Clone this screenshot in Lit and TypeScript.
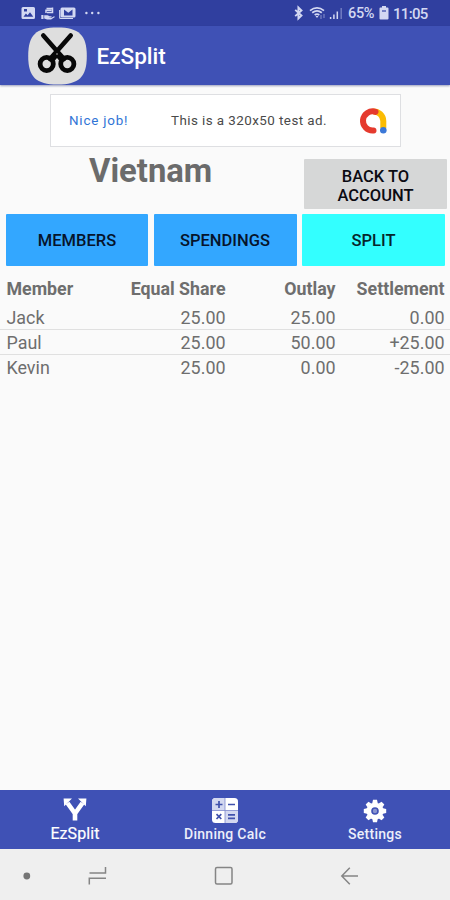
import { LitElement, html, css, svg } from "lit";
import { customElement, state } from "lit/decorators.js";
import { classMap } from "lit/directives/class-map.js";

interface Row {
  member: string;
  share: string;
  outlay: string;
  settlement: string;
}

const rows: Row[] = [
  { member: "Jack", share: "25.00", outlay: "25.00", settlement: "0.00" },
  { member: "Paul", share: "25.00", outlay: "50.00", settlement: "+25.00" },
  { member: "Kevin", share: "25.00", outlay: "0.00", settlement: "-25.00" },
];

@customElement("status-bar")
class StatusBar extends LitElement {
  static styles = css`
    :host {
      display: flex;
      align-items: center;
      height: 26px;
      padding: 0 22px 0 21px;
      box-sizing: border-box;
      background: #303f9f;
      color: #d3d8f2;
      font: 500 15px/26px Roboto, sans-serif;
    }
    svg { display: block; flex: none; }
    .spacer { flex: 1; }
    .pct { margin-left: 5px; width: 26px; padding-top: 2px; font-size: 14.5px; white-space: nowrap; letter-spacing: -0.35px; }
    .batt { margin-left: 5px; }
    .time { margin-left: 4px; width: 35px; padding-top: 2px; white-space: nowrap; letter-spacing: -0.7px; }
  `;
  render() {
    return html`
      <svg width="82" height="16" viewBox="0 0 82 16" fill="#d3d8f2">
        <path fill-rule="evenodd" d="M2 2h10.500a1.500 1.500 0 0 1 1.500 1.500v9a1.500 1.500 0 0 1-1.500 1.500H2a1.500 1.500 0 0 1-1.500-1.500v-9A1.500 1.500 0 0 1 2 2zM2.500 11.800h9.800L9 7.300l-2.400 3-1.700-1.900zM3 4v2.500h3V4z" />
        <path d="M20.300 10h2.200v4h-2.200zM23.200 10.200h3.300l2.200 1h2l-.4 1-3 .1 3.200.4 2.600-1.500.8.900-3.800 2.300h-4l-2.900-.8z" />
        <path d="M25 8V5.300h5.500M25.500 3.500h6M31.500 2.500v5H26" fill="none" stroke="#d3d8f2" stroke-width="1.500" />
        <path fill-rule="evenodd" d="M41 2.500h12a1.500 1.500 0 0 1 1.500 1.500v7a1.500 1.500 0 0 1-1.500 1.500H41a1.500 1.500 0 0 1-1.500-1.500V4A1.500 1.500 0 0 1 41 2.500zM43 4.500v6h8.500v-6l-4.200 3.200z" />
        <path d="M38.700 5v7.500q0 1 1 1H52" fill="none" stroke="#d3d8f2" stroke-width="1.200" />
        <circle cx="65.400" cy="8" r="1.200" /><circle cx="71.200" cy="8" r="1.200" /><circle cx="77.400" cy="8" r="1.200" />
      </svg>
      <span class="spacer"></span>
      <svg width="50" height="16" viewBox="0 0 50 16" fill="none" stroke="#d3d8f2">
        <path d="M2.200 4.900l6.300 5.600L5.400 13.500V2.500l3.100 3-6.300 5.600" stroke-width="1.900" />
        <path d="M17 5.600q7-5.400 14 0M19.200 7.800q4.800-3.700 9.600 0M21.700 10q2.300-1.800 4.600 0" stroke-width="1.800" />
        <path d="M22.500 11h3l-1.500 2z" fill="#d3d8f2" stroke="none" />
        <path d="M28 10v4M31 9v4" stroke-width="1.200" opacity=".45" />
        <path d="M37.600 12v2M40.900 9.500V14M44.300 6.500V14" stroke-width="1.500" />
        <path d="M48.200 3v11" stroke-width="1.500" opacity=".4" />
      </svg>
      <span class="pct">65%</span>
      <svg class="batt" width="10" height="14" viewBox="0 0 10 14" fill="#d3d8f2">
        <path d="M3 0h4v1.500h1.500a1 1 0 0 1 1 1V12.500a1 1 0 0 1-1 1h-7a1 1 0 0 1-1-1V2.500a1 1 0 0 1 1-1H3z" />
        <path d="M3 4h4v2H3z" fill="#7480c4" />
      </svg>
      <span class="time">11:05</span>
    `;
  }
}

@customElement("app-bar")
class AppBar extends LitElement {
  static styles = css`
    :host {
      display: flex;
      align-items: center;
      height: 59px;
      padding-left: 28px;
      background: #3f51b5;
      box-shadow: 0 1px 2px rgba(40, 50, 110, 0.45);
      color: #fff;
      font: 500 22.5px/30px Roboto, sans-serif;
      position: relative;
    }
    svg { flex: none; }
    .name { margin-left: 9.5px; padding-top: 1px; }
  `;
  render() {
    return html`
      <svg width="59" height="58" viewBox="0 0 59 58">
        <path d="M29.500.5C51 .5 58.800 8 58.800 29S51 57.500 29.500 57.500.2 50 .2 29 8 .5 29.500.5z" fill="#dedede" />
        <g fill="none" stroke="#080808" stroke-linecap="round">
          <path d="M15.300 8.500L36 32M42.700 8.500L22 32" stroke-width="4.600" />
          <circle cx="18.700" cy="37" r="6.600" stroke-width="4.800" />
          <circle cx="39.300" cy="37" r="6.600" stroke-width="4.800" />
        </g>
        <path d="M29 21l6 8-3.500 5-2.500-3-2.500 3-3.500-5z" fill="#080808" />
        <circle cx="29" cy="27" r=".8" fill="#bbb" />
      </svg>
      <span class="name">EzSplit</span>
    `;
  }
}

@customElement("ad-banner")
class AdBanner extends LitElement {
  static styles = css`
    :host {
      display: flex;
      align-items: center;
      width: 351px;
      height: 53px;
      box-sizing: border-box;
      border: 1px solid #dedfe2;
      background: #fff;
      padding: 0 12px 0 18px;
      font: 400 13.400px/20px Roboto, sans-serif;
      color: #4a4a4a;
      white-space: nowrap;
    }
    .praise { color: #2f74d6; width: 102px; letter-spacing: 0.8px; padding-top: 1px; }
    .copy { flex: 1; letter-spacing: 0.44px; padding-top: 1px; }
  `;
  render() {
    return html`
      <span class="praise">Nice job!</span>
      <span class="copy">This is a 320x50 test ad.</span>
      <svg width="29" height="28" viewBox="0 0 29 28" fill="none" stroke-width="6">
        <path d="M14 4.500a9.700 9.700 0 0 1 10.300 9.500v7" stroke="#fbbc04" />
        <path d="M16.500 4.800A9.600 9.600 0 1 0 14.500 23.500" stroke="#e53a2e" stroke-linecap="round" />
        <circle cx="24.300" cy="23.300" r="3.300" fill="#3b78d8" />
      </svg>
    `;
  }
}

@customElement("nav-bottom")
class NavBottom extends LitElement {
  static styles = css`
    :host {
      display: grid;
      grid-template-columns: repeat(3, 1fr);
      height: 59px;
      background: #3f51b5;
      color: #fff;
      font: 500 14px/18px Roboto, sans-serif;
    }
    .item { display: flex; flex-direction: column; align-items: center; padding-top: 6px; white-space: nowrap; }
    .item svg { display: block; height: 28px; }
    .item span { padding-top: 1px; }
    .active { font-size: 16px; letter-spacing: 0.1px; font-weight: 400; -webkit-text-stroke: 0.2px #fff; }
    .rest { color: #eceefa; letter-spacing: 0.28px; }
  `;
  render() {
    const teeth = [0, 45, 90, 135, 180, 225, 270, 315];
    return html`
      <div class="item active">
        <svg width="28" height="28" viewBox="0 0 28 28">
          <path d="M14 24.500V17.500L6.500 7M14 17.500L21.500 7" fill="none" stroke="#fff" stroke-width="4.600" />
          <path d="M2.600 2.500H11L3.200 10.300zM25.400 2.500H17l7.800 7.800z" fill="#fff" />
        </svg>
        <span>EzSplit</span>
      </div>
      <div class="item rest">
        <svg width="28" height="28" viewBox="0 0 28 28">
          <rect x="1" y="2" width="26" height="25" rx="3.500" fill="#fff" />
          <path d="M1 14.500V5.500A3.500 3.500 0 0 1 4.500 2H14v12.500zM14 14.500h13v9a3.500 3.500 0 0 1-3.500 3.500H14z" fill="#d3d8f0" />
          <path d="M14 2v25M1 14.500h26" stroke="#7d89cb" stroke-width=".8" />
          <path d="M4.500 8.500h7M8 5v7M17 8.500h7M17 18.800h7M17 22.400h7M5.500 18.200l4.800 4.800M10.300 18.200l-4.800 4.800" stroke="#4051ac" stroke-width="1.700" />
        </svg>
        <span>Dinning Calc</span>
      </div>
      <div class="item rest">
        <svg width="28" height="28" viewBox="0 0 28 28">
          ${teeth.map((a) => svg`<path d="M11.300 7L12 3.800h4L16.700 7z" fill="#fff" transform="rotate(${a} 14 15)" />`)}
          <circle cx="14" cy="15" r="8.600" fill="#fff" />
          <circle cx="14" cy="15" r="3" fill="#8a95d0" stroke="#3f51b5" stroke-width="1.600" />
        </svg>
        <span>Settings</span>
      </div>
    `;
  }
}

@customElement("system-keys")
class SystemKeys extends LitElement {
  static styles = css`
    :host { display: block; height: 51px; background: #efefef; }
    svg { display: block; }
  `;
  render() {
    return html`
      <svg width="450" height="51" viewBox="0 0 450 51" fill="none" stroke="#858585" stroke-width="1.500">
        <circle cx="26.800" cy="27" r="3.400" fill="#757575" stroke="none" />
        <path d="M89.500 24H105.500V18M106 29.300H89.300V35.500" />
        <rect x="215.500" y="18.500" width="16.500" height="16.500" rx="1.500" />
        <path d="M358 27H342M349.800 18.800L341.800 27l8 8.200" />
      </svg>
    `;
  }
}

@customElement("app-root")
class AppRoot extends LitElement {
  @state() private tab = "SPLIT";

  static styles = css`
    :host {
      display: flex;
      flex-direction: column;
      width: 450px;
      height: 900px;
      background: #fafafa;
      font-family: Roboto, sans-serif;
      color: #6e6e6e;
      overflow: hidden;
    }
    main { flex: 1; display: flex; flex-direction: column; }
    ad-banner { margin: 9px 0 0 50px; }
    .heading { display: flex; margin-top: 12px; height: 55px; }
    .heading h1 {
      margin: 0;
      width: 304px;
      box-sizing: border-box;
      padding-left: 89px;
      font: 700 32.800px/24px Roboto, sans-serif;
      color: #6b6b6b;
    }
    button {
      border: 0;
      padding: 0;
      border-radius: 1px;
      color: #0b0b12;
      font: 500 16.500px/19px Roboto, sans-serif;
    }
    .back { width: 143px; height: 50px; background: #d6d7d7; padding-top: 3px; }
    .tabs { display: grid; grid-template-columns: 142px 143px 143px; gap: 5.500px; padding-left: 6px; }
    .tab { height: 52px; background: #33a7ff; color: #06142b; }
    .tab.on { background: #33ffff; color: #06262b; }
    .table { margin-top: 9px; font-size: 17.900px; }
    .row {
      display: grid;
      grid-template-columns: 106px 113px 110px 109px;
      padding: 0 5.500px 0 6.500px;
      height: 25px;
      line-height: 26px;
      box-sizing: border-box;
      white-space: nowrap;
    }
    .row span + span { text-align: right; }
    .head { height: 31px; line-height: 28px; font-weight: 700; font-size: 17.800px; }
    .head + .row { height: 23px; line-height: 24px; }
    .row + .row + .row { border-top: 1px solid #e0e0e0; }
  `;

  render() {
    return html`
      <status-bar></status-bar>
      <app-bar></app-bar>
      <main>
        <ad-banner></ad-banner>
        <div class="heading">
          <h1>Vietnam</h1>
          <button class="back">BACK TO<br />ACCOUNT</button>
        </div>
        <div class="tabs">
          ${["MEMBERS", "SPENDINGS", "SPLIT"].map(
            (t) => html`<button class=${classMap({ tab: true, on: t === this.tab })} @click=${() => (this.tab = t)}>${t}</button>`
          )}
        </div>
        <div class="table">
          <div class="row head">
            <span>Member</span><span>Equal Share</span><span>Outlay</span><span>Settlement</span>
          </div>
          ${rows.map(
            (r) => html`<div class="row">
              <span>${r.member}</span><span>${r.share}</span><span>${r.outlay}</span><span>${r.settlement}</span>
            </div>`
          )}
        </div>
      </main>
      <nav-bottom></nav-bottom>
      <system-keys></system-keys>
    `;
  }
}
